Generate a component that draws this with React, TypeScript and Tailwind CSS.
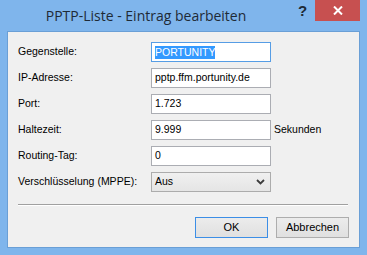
import React from 'react';

const rows = [
  { label: 'Gegenstelle:', value: 'PORTUNITY', focused: true },
  { label: 'IP-Adresse:', value: 'pptp.ffm.portunity.de' },
  { label: 'Port:', value: '1.723' },
  { label: 'Haltezeit:', value: '9.999', unit: 'Sekunden' },
  { label: 'Routing-Tag:', value: '0' },
];

export default function App() {
  return (
    <div
      className="w-[367px] h-[255px] bg-[#7fb5ec] flex flex-col overflow-hidden"
      style={{ fontFamily: '"Liberation Sans", Arial, sans-serif' }}
    >
      {/* title bar */}
      <div className="h-[31px] flex shrink-0">
        <div
          className="flex-1 text-center text-[14px] leading-[31px] text-[#1e2a36] pl-[2px]"
          style={{ fontFamily: '"Open Sans", "Noto Sans", sans-serif' }}
        >
          PPTP-Liste - Eintrag bearbeiten
        </div>
        <div className="w-[25px] h-[21px] flex items-center justify-center text-[15px] font-bold text-[#1e2a36] leading-none">
          ?
        </div>
        <div className="w-[45px] h-[21px] bg-[#c75050] flex items-center justify-center mr-[7px]">
          <svg width="10" height="9" viewBox="0 0 10 9">
            <path d="M1 0.5 L9 8.5 M9 0.5 L1 8.5" stroke="#fff" strokeWidth="2" />
          </svg>
        </div>
      </div>

      {/* client area */}
      <div className="flex-1 mx-[7px] mb-[7px] border border-[#6a9fd6] bg-[#f0f0f0] flex flex-col text-[10.5px] text-black">
        <div className="pt-[10px] pl-[10px] flex flex-col gap-[6px]">
          {rows.map((r) => (
            <div key={r.label} className="flex items-center h-[20px]">
              <span className="w-[133px] shrink-0">{r.label}</span>
              <div
                className={`w-[120px] h-[20px] bg-white border flex items-center pl-[3px] ${
                  r.focused ? 'border-[#569de5]' : 'border-[#abadb3]'
                }`}
              >
                {r.focused ? (
                  <span className="bg-[#3399ff] text-white leading-[13px]">{r.value}</span>
                ) : (
                  <span>{r.value}</span>
                )}
              </div>
              {r.unit && <span className="ml-[3px]">{r.unit}</span>}
            </div>
          ))}
          <div className="flex items-center h-[20px]">
            <span className="w-[133px] shrink-0">Verschlüsselung (MPPE):</span>
            <div className="w-[120px] h-[20px] bg-gradient-to-b from-[#f0f0f0] to-[#e5e5e5] border border-[#acacac] flex items-center pl-[3px] pr-[5px] justify-between">
              <span>Aus</span>
              <svg width="9" height="6" viewBox="0 0 9 6">
                <path d="M1 1 L4.5 4.5 L8 1" stroke="#3c3c3c" strokeWidth="1.8" fill="none" />
              </svg>
            </div>
          </div>
        </div>

        <div className="mt-[12px] ml-[10px] mr-[11px] h-[2px] border-t border-[#a0a0a0] border-b-white border-b" />

        <div className="mt-[11px] flex justify-end gap-[8px] mr-[10px]">
          <button className="w-[73px] h-[21px] border border-[#3c8ee6] bg-gradient-to-b from-[#ececec] to-[#e0e0e0] text-[11px]">
            OK
          </button>
          <button className="w-[73px] h-[21px] border border-[#adadad] bg-gradient-to-b from-[#ececec] to-[#e0e0e0] text-[11px]">
            Abbrechen
          </button>
        </div>
      </div>
    </div>
  );
}
